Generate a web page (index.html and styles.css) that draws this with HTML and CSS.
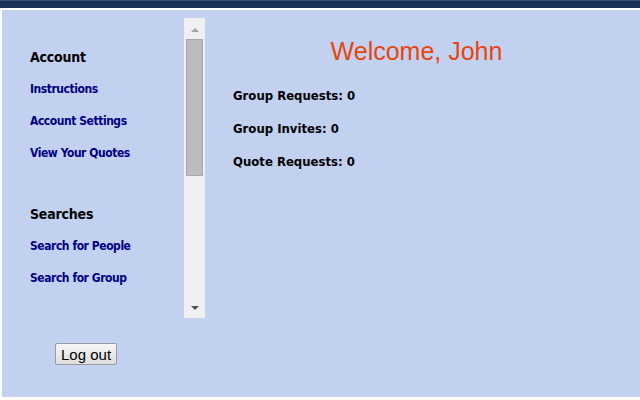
FILE: index.html
```html
<!DOCTYPE html>
<html>
<head>
<meta charset="utf-8">
<link rel="stylesheet" href="styles.css">
</head>
<body>
<div class="topbar"></div>
<div class="page">
  <div class="sidebar">
    <div class="navbox">
      <div class="nav">
        <div class="nav-head">Account</div>
        <a class="nav-link" href="#">Instructions</a>
        <a class="nav-link" href="#">Account Settings</a>
        <a class="nav-link" href="#">View Your Quotes</a>
        <div class="nav-head nav-head-gap">Searches</div>
        <a class="nav-link" href="#">Search for People</a>
        <a class="nav-link" href="#">Search for Group</a>
      </div>
      <div class="scrollbar">
        <div class="arrow arrow-up"></div>
        <div class="thumb"></div>
        <div class="track-rest"></div>
        <div class="arrow arrow-down"></div>
      </div>
    </div>
    <div class="logout-wrap"><button class="logout">Log out</button></div>
  </div>
  <div class="main">
    <h1 class="welcome">Welcome, John</h1>
    <div class="stat">Group Requests: 0</div>
    <div class="stat">Group Invites: 0</div>
    <div class="stat">Quote Requests: 0</div>
  </div>
</div>
</body>
</html>
```
FILE: styles.css
```css
html, body {
  margin: 0;
  padding: 0;
  background: #ffffff;
}
body {
  width: 640px;
  height: 400px;
  overflow: hidden;
}
.topbar {
  height: 8px;
  background: #1a3157;
  border-top: 1px solid #3a4f70;
  box-sizing: border-box;
}
.page {
  margin: 2px 0 0 2px;
  height: 387px;
  background: #c2d1f0;
  display: flex;
}
.sidebar {
  width: 203px;
  padding-top: 8px;
  display: flex;
  flex-direction: column;
}
.navbox {
  height: 300px;
  display: flex;
}
.nav {
  flex: 1;
  padding: 23px 0 0 28px;
  display: flex;
  flex-direction: column;
  font-family: "DejaVu Sans Condensed", "DejaVu Sans", Verdana, sans-serif;
  font-weight: bold;
}
.nav-head {
  height: 32px;
  line-height: 32px;
  font-size: 14px;
  letter-spacing: -0.2px;
  color: #000000;
}
.nav-head-gap {
  margin-top: 29px;
}
.nav-link {
  height: 32px;
  line-height: 32px;
  font-size: 12px;
  letter-spacing: -0.45px;
  color: #000080;
  text-decoration: none;
}
.scrollbar {
  width: 21px;
  background: #f0f0f0;
  display: flex;
  flex-direction: column;
  align-items: center;
}
.arrow {
  width: 0;
  height: 0;
  border-left: 4px solid transparent;
  border-right: 4px solid transparent;
}
.arrow-up {
  margin: 10px 0 7px;
  border-bottom: 4px solid #a3a3a3;
}
.arrow-down {
  margin: 0 0 8px;
  border-top: 4px solid #505050;
}
.thumb {
  width: 17px;
  height: 137px;
  box-sizing: border-box;
  background: #bcbcbc;
  border: 1px solid #a8a8a8;
}
.track-rest {
  flex: 1;
}
.logout-wrap {
  padding: 25px 0 0 53px;
}
.logout {
  font-family: "Liberation Sans", Arial, sans-serif;
  font-size: 15px;
  color: #000;
  height: 22px;
  padding: 0 5px;
  background: linear-gradient(#f6f6f6, #dedede);
  border: 1px solid #9a9a9a;
  border-radius: 2px;
}
.main {
  flex: 1;
  padding: 0 0 0 28px;
  font-family: "DejaVu Sans Condensed", "DejaVu Sans", Verdana, sans-serif;
}
.welcome {
  margin: 27px 0 0;
  text-align: center;
  font-family: "Liberation Sans", Arial, sans-serif;
  font-weight: normal;
  font-size: 25px;
  line-height: 28px;
  color: #e8440c;
  padding-right: 40px;
}
.stat {
  margin-top: 5px;
  height: 28px;
  line-height: 28px;
  font-size: 13px;
  font-weight: bold;
  color: #000;
}
.welcome + .stat {
  margin-top: 17px;
}
```
